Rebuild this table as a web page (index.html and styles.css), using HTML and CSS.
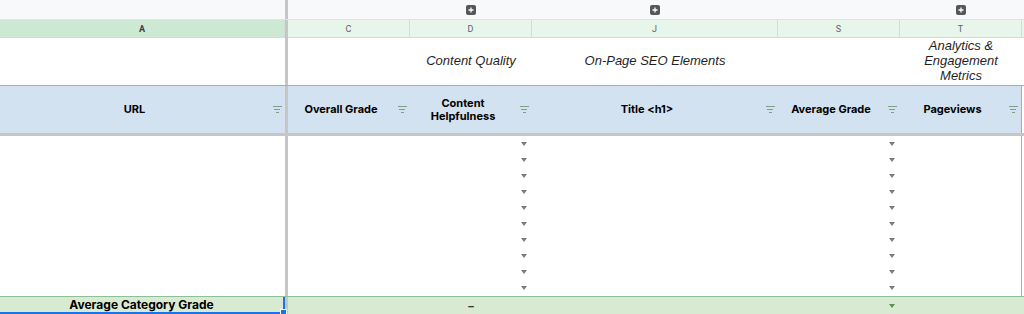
FILE: index.html
```html
<!DOCTYPE html>
<html lang="en">
<head>
    <meta charset="UTF-8">
    <title>Content Audit</title>
    <link rel="stylesheet" href="styles.css">
</head>
<body>
    <div class="sheet">
        <!-- group toggles -->
        <div class="row groups">
            <div></div><div class="freeze"></div>
            <div></div>
            <div class="group"><span class="toggle"><svg width="10" height="10" viewBox="0 0 10 10"><path d="M5 2.5v5M2.5 5h5" stroke="#fff" stroke-width="1.3"/></svg></span></div>
            <div class="group"><span class="toggle"><svg width="10" height="10" viewBox="0 0 10 10"><path d="M5 2.5v5M2.5 5h5" stroke="#fff" stroke-width="1.3"/></svg></span></div>
            <div></div>
            <div class="group"><span class="toggle"><svg width="10" height="10" viewBox="0 0 10 10"><path d="M5 2.5v5M2.5 5h5" stroke="#fff" stroke-width="1.3"/></svg></span></div>
            <div></div>
        </div>

        <!-- column letters -->
        <div class="row letters">
            <div class="letter active">A</div><div class="freeze"></div>
            <div class="letter">C</div>
            <div class="letter">D</div>
            <div class="letter">J</div>
            <div class="letter">S</div>
            <div class="letter">T</div>
            <div class="letter blank"></div>
        </div>

        <!-- category labels -->
        <div class="row labels">
            <div></div><div class="freeze"></div>
            <div></div>
            <div class="label">Content Quality</div>
            <div class="label">On-Page SEO Elements</div>
            <div></div>
            <div class="label">Analytics &amp;<br>Engagement<br>Metrics</div>
            <div></div>
        </div>

        <!-- table header -->
        <div class="row heads">
            <div class="head"><span>URL</span><i class="filter"></i></div><div class="freeze"></div>
            <div class="head"><span>Overall Grade</span><i class="filter"></i></div>
            <div class="head"><span>Content<br>Helpfulness</span><i class="filter"></i></div>
            <div class="head"><span>Title &lt;h1&gt;</span><i class="filter"></i></div>
            <div class="head"><span>Average Grade</span><i class="filter"></i></div>
            <div class="head last"><span>Pageviews</span><i class="filter"></i></div>
            <div class="gap"></div>
        </div>

        <div class="freeze-row"></div>

        <!-- data rows -->
        <div class="body">
            <div class="row drow"><div></div><div class="freeze"></div><div></div><div class="pick"><i class="arrow"></i></div><div></div><div class="pick"><i class="arrow"></i></div><div class="last"></div><div></div></div>
            <div class="row drow"><div></div><div class="freeze"></div><div></div><div class="pick"><i class="arrow"></i></div><div></div><div class="pick"><i class="arrow"></i></div><div class="last"></div><div></div></div>
            <div class="row drow"><div></div><div class="freeze"></div><div></div><div class="pick"><i class="arrow"></i></div><div></div><div class="pick"><i class="arrow"></i></div><div class="last"></div><div></div></div>
            <div class="row drow"><div></div><div class="freeze"></div><div></div><div class="pick"><i class="arrow"></i></div><div></div><div class="pick"><i class="arrow"></i></div><div class="last"></div><div></div></div>
            <div class="row drow"><div></div><div class="freeze"></div><div></div><div class="pick"><i class="arrow"></i></div><div></div><div class="pick"><i class="arrow"></i></div><div class="last"></div><div></div></div>
            <div class="row drow"><div></div><div class="freeze"></div><div></div><div class="pick"><i class="arrow"></i></div><div></div><div class="pick"><i class="arrow"></i></div><div class="last"></div><div></div></div>
            <div class="row drow"><div></div><div class="freeze"></div><div></div><div class="pick"><i class="arrow"></i></div><div></div><div class="pick"><i class="arrow"></i></div><div class="last"></div><div></div></div>
            <div class="row drow"><div></div><div class="freeze"></div><div></div><div class="pick"><i class="arrow"></i></div><div></div><div class="pick"><i class="arrow"></i></div><div class="last"></div><div></div></div>
            <div class="row drow"><div></div><div class="freeze"></div><div></div><div class="pick"><i class="arrow"></i></div><div></div><div class="pick"><i class="arrow"></i></div><div class="last"></div><div></div></div>
            <div class="row drow"><div></div><div class="freeze"></div><div></div><div class="pick"><i class="arrow"></i></div><div></div><div class="pick"><i class="arrow"></i></div><div class="last"></div><div></div></div>
        </div>

        <!-- summary row -->
        <div class="row total">
            <div class="selected">Average Category Grade<span class="handle"></span></div><div class="freeze"></div>
            <div></div>
            <div class="dash">&ndash;</div>
            <div></div>
            <div class="pick"><i class="arrow green"></i></div>
            <div></div>
            <div></div>
        </div>
    </div>
</body>
</html>
```

FILE: styles.css
```css
body {
    margin: 0;
    background: #fff;
    font-family: Inter, "Liberation Sans", sans-serif;
    color: #1f1f1f;
}
.sheet {
    width: 1024px;
    height: 314px;
    overflow: hidden;
}
.row {
    display: grid;
    grid-template-columns: 285px 3px 122px 122px 246px 122px 122px 2px;
}
.row > div {
    box-sizing: border-box;
}
.freeze {
    background: #c6c6c6;
}

/* group toggles */
.groups {
    height: 20px;
    background: #f8f9fa;
    border-bottom: 1px solid #e1e3e1;
    box-sizing: border-box;
}
.group {
    display: flex;
    align-items: center;
    justify-content: center;
}
.toggle {
    display: flex;
    width: 10px;
    height: 10px;
    background: #575757;
    border-radius: 2px;
}

/* column letters */
.letters {
    height: 18px;
}
.letter {
    display: flex;
    align-items: center;
    justify-content: center;
    background: #e8f5eb;
    border-right: 1px solid #cfdfd2;
    border-bottom: 1px solid #cfdfd2;
    font-family: Roboto, sans-serif;
    font-size: 9px;
    color: #5f6368;
}
.letter.active {
    background: #cde9d4;
    color: #3c4043;
    font-weight: 700;
}
.letter.blank {
    border-right: none;
}

/* category labels */
.labels {
    height: 47px;
}
.label {
    display: flex;
    align-items: center;
    justify-content: center;
    text-align: center;
    font-family: "Liberation Sans", Arial, sans-serif;
    font-style: italic;
    font-size: 13px;
    line-height: 14.8px;
    color: #1f1f1f;
}

/* table header */
.heads {
    height: 48px;
    background: #d3e2f1;
    border-top: 1px solid #8dbf98;
    box-sizing: border-box;
}
.head {
    display: grid;
    grid-template-columns: 1fr 16px;
    align-items: center;
    text-align: center;
    font-size: 11px;
    font-weight: 700;
    line-height: 13px;
    color: #000;
}
.head.last {
    border-right: 1px solid #8dbf98;
}
.heads .gap {
    background: #fff;
}
.filter {
    justify-self: center;
    width: 9px;
    height: 7px;
    background:
        linear-gradient(#7aa386, #7aa386) center 0 / 9px 1px no-repeat,
        linear-gradient(#7aa386, #7aa386) center 3px / 6px 1px no-repeat,
        linear-gradient(#7aa386, #7aa386) center 6px / 3px 1px no-repeat;
}
.freeze-row {
    height: 3px;
    background: #c6c6c6;
}

/* data rows */
.body {
    border-bottom: 1px solid #8dbf98;
}
.drow {
    height: 16px;
}
.drow .last {
    border-right: 1px solid #8dbf98;
}
.pick {
    display: flex;
    align-items: center;
    justify-content: flex-end;
    padding-right: 5px;
}
.arrow {
    width: 0;
    height: 0;
    border-left: 3.5px solid transparent;
    border-right: 3.5px solid transparent;
    border-top: 4px solid #7b7b7b;
}
.arrow.green {
    border-top-color: #5e8f52;
}

/* summary row */
.total {
    height: 17px;
    background: #d9ead3;
}
.selected {
    position: relative;
    display: flex;
    align-items: center;
    justify-content: center;
    border-right: 2px solid #1a73e8;
    border-bottom: 2px solid #1a73e8;
    font-size: 12px;
    font-weight: 700;
    color: #000;
}
.handle {
    position: absolute;
    right: -4px;
    bottom: -4px;
    width: 5px;
    height: 5px;
    background: #1a73e8;
    border: 1px solid #fff;
}
.dash {
    display: flex;
    align-items: center;
    justify-content: center;
    font-size: 11px;
    font-weight: 700;
    color: #333;
}
```
